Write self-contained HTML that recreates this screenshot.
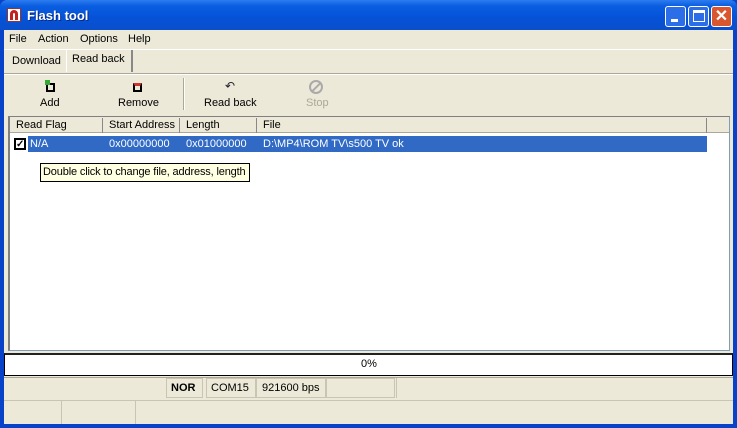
<!DOCTYPE html>
<html><head><style>
*{margin:0;padding:0;box-sizing:border-box}
body{width:737px;height:428px;overflow:hidden;background:#0842c8;font-family:"Liberation Sans",sans-serif;font-size:11px;color:#000;position:relative}
.a{position:absolute}
.t{white-space:nowrap}
</style></head><body>
<div class="a" style="left:0;top:0;width:737px;height:30px;background:linear-gradient(#2d7cf0 0%,#0a5ee0 20%,#0552d8 60%,#0a4fcc 100%);border-radius:7px 7px 0 0"></div>
<div class="a" style="left:7px;top:8px;width:14px;height:14px;background:#fff;border:1px solid #933"><div class="a" style="left:2px;top:1px;width:8px;height:10px;border:3px solid #c02020;border-bottom:none;border-radius:5px 5px 0 0"></div></div>
<div class="a t" style="left:27px;top:8px;color:#fff;font-weight:bold;font-size:13px;text-shadow:1px 1px #0a2a80">Flash tool</div>
<div class="a" style="left:665px;top:6px;width:21px;height:21px;border:1px solid #fff;border-radius:3px;background:#2b6ee8"><div class="a" style="left:5px;top:12px;width:7px;height:3px;background:#fff"></div></div>
<div class="a" style="left:688px;top:6px;width:21px;height:21px;border:1px solid #fff;border-radius:3px;background:#2b6ee8"><div class="a" style="left:4px;top:3px;width:12px;height:12px;border:1px solid #fff;border-top:3px solid #fff"></div></div>
<div class="a t" style="left:711px;top:6px;width:21px;height:21px;border:1px solid #fff;border-radius:3px;background:#d9572f;color:#fff;font-size:16px;font-weight:bold;text-align:center;line-height:19px">✕</div>
<div class="a" style="left:4px;top:30px;width:729px;height:394px;background:#ece9d8"></div>
<div class="a t" style="left:9px;top:33px;font-size:11px">File</div>
<div class="a t" style="left:38px;top:33px">Action</div>
<div class="a t" style="left:80px;top:33px">Options</div>
<div class="a t" style="left:128px;top:33px">Help</div>
<div class="a" style="left:4px;top:49px;width:729px;height:1px;background:#fff"></div>
<div class="a t" style="left:12px;top:55px">Download</div>
<div class="a" style="left:66px;top:50px;width:67px;height:22px;border-left:1px solid #fff;border-right:2px solid #888"></div>
<div class="a t" style="left:72px;top:53px">Read back</div>
<div class="a" style="left:4px;top:73px;width:729px;height:1px;background:#aca899"></div>
<div class="a" style="left:4px;top:74px;width:729px;height:1px;background:#fff"></div>
<div class="a" style="left:46px;top:83px;width:9px;height:9px;border:2px solid #000"></div><div class="a" style="left:45px;top:80px;width:5px;height:5px;background:#3a3"></div>
<div class="a t" style="left:40px;top:97px">Add</div>
<div class="a" style="left:133px;top:83px;width:9px;height:9px;border:2px solid #000;border-top:3px solid #c33"></div>
<div class="a t" style="left:118px;top:97px">Remove</div>
<div class="a" style="left:183px;top:78px;width:1px;height:32px;background:#aca899"></div><div class="a" style="left:184px;top:78px;width:1px;height:32px;background:#fff"></div>
<div class="a t" style="left:225px;top:79px;font-size:12px;color:#223">↶</div>
<div class="a t" style="left:204px;top:97px">Read back</div>
<div class="a" style="left:309px;top:80px;width:14px;height:14px;border:2px solid #aaa;border-radius:50%"></div><div class="a" style="left:310px;top:86px;width:13px;height:2px;background:#aaa;transform:rotate(-45deg)"></div>
<div class="a t" style="left:306px;top:97px;color:#aca899">Stop</div>
<div class="a" style="left:8px;top:116px;width:722px;height:235px;background:#fff;border:1px solid #7f9db9;border-top:2px solid #808080;border-left:2px solid #808080"></div>
<div class="a" style="left:10px;top:117px;width:719px;height:16px;background:#ece9d8;border-bottom:1px solid #aca899"></div>
<div class="a" style="left:102px;top:118px;width:1px;height:15px;background:#888"></div>
<div class="a" style="left:179px;top:118px;width:1px;height:15px;background:#888"></div>
<div class="a" style="left:256px;top:118px;width:1px;height:15px;background:#888"></div>
<div class="a" style="left:706px;top:118px;width:1px;height:15px;background:#888"></div>
<div class="a t" style="left:16px;top:119px">Read Flag</div>
<div class="a t" style="left:109px;top:119px">Start Address</div>
<div class="a t" style="left:186px;top:119px">Length</div>
<div class="a t" style="left:263px;top:119px">File</div>
<div class="a" style="left:28px;top:136px;width:679px;height:16px;background:#316ac5"></div>
<div class="a t" style="left:14px;top:138px;width:12px;height:12px;border:2px solid #000;background:#fff;font-size:10px;line-height:9px;font-weight:bold;text-align:center">✓</div>
<div class="a t" style="left:30px;top:138px;color:#fff">N/A</div>
<div class="a t" style="left:109px;top:138px;color:#fff">0x00000000</div>
<div class="a t" style="left:186px;top:138px;color:#fff">0x01000000</div>
<div class="a t" style="left:263px;top:138px;color:#fff">D:\MP4\ROM TV\s500 TV ok</div>
<div class="a t" style="left:40px;top:163px;width:210px;height:19px;background:#ffffe1;border:1px solid #000;padding:2px 0 0 2px;letter-spacing:-0.15px">Double click to change file, address, length</div>
<div class="a" style="left:4px;top:353px;width:729px;height:23px;background:#fff;border:1px solid #000;border-top:2px solid #222"></div>
<div class="a t" style="left:361px;top:358px">0%</div>
<div class="a" style="left:4px;top:377px;width:729px;height:1px;background:#aca899"></div>
<div class="a" style="left:166px;top:378px;width:37px;height:20px;border:1px solid #c8c5b5"></div>
<div class="a t" style="left:171px;top:382px;font-weight:bold">NOR</div>
<div class="a" style="left:206px;top:378px;width:50px;height:20px;border:1px solid #c8c5b5"></div>
<div class="a t" style="left:211px;top:382px">COM15</div>
<div class="a" style="left:256px;top:378px;width:70px;height:20px;border:1px solid #c8c5b5"></div>
<div class="a t" style="left:262px;top:382px">921600 bps</div>
<div class="a" style="left:326px;top:378px;width:69px;height:20px;border:1px solid #c8c5b5"></div>
<div class="a" style="left:396px;top:378px;width:337px;height:20px;border-left:1px solid #c8c5b5"></div>
<div class="a" style="left:4px;top:400px;width:729px;height:1px;background:#c8c5b5"></div>
<div class="a" style="left:61px;top:401px;width:75px;height:23px;border-left:1px solid #c8c5b5;border-right:1px solid #c8c5b5"></div>
</body></html>
